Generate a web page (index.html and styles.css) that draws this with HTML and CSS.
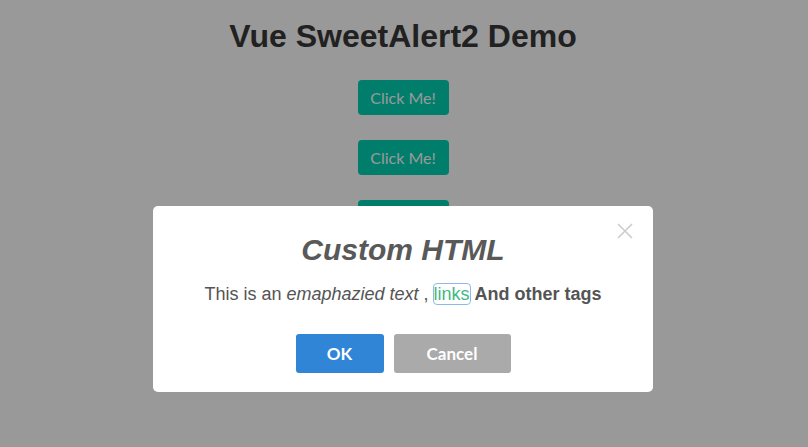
FILE: index.html
```html
<!DOCTYPE html>
<html lang="en">
<head>
<meta charset="utf-8">
<title>Vue SweetAlert2 Demo</title>
<link rel="stylesheet" href="styles.css">
</head>
<body>
<div class="app">
  <h1 class="app-title">Vue SweetAlert2 Demo</h1>
  <div class="demo-list">
    <button class="demo-btn">Click Me!</button>
    <button class="demo-btn">Click Me!</button>
    <button class="demo-btn">Click Me!</button>
    <button class="demo-btn">Click Me!</button>
  </div>
</div>
<div class="overlay">
  <div class="popup">
    <button class="popup-close" aria-label="Close">
      <svg width="16" height="16" viewBox="0 0 16 16"><path d="M1 1 L15 15 M15 1 L1 15" stroke="#cccccc" stroke-width="1.6" fill="none"/></svg>
    </button>
    <h2 class="popup-title">Custom HTML</h2>
    <div class="popup-content">This is an <em>emaphazied text</em> , <a class="popup-link" href="#">links</a> <strong>And other tags</strong></div>
    <div class="popup-actions">
      <button class="popup-btn popup-btn-ok">OK</button>
      <button class="popup-btn popup-btn-cancel">Cancel</button>
    </div>
  </div>
</div>
</body>
</html>
```
FILE: styles.css
```css
html, body {
  margin: 0;
  padding: 0;
}
body {
  background: #ffffff;
  font-family: "Liberation Sans", Arial, sans-serif;
  color: #363636;
  height: 447px;
  overflow: hidden;
}
.app {
  display: flex;
  flex-direction: column;
  align-items: center;
  padding: 18px 2px 0 0;
}
.app-title {
  margin: 0;
  font-size: 32px;
  font-weight: bold;
  line-height: 36px;
  color: #383838;
}
.demo-list {
  display: flex;
  flex-direction: column;
  align-items: center;
  gap: 25px;
  margin-top: 26px;
}
.demo-btn {
  font-family: Lato, "Open Sans", sans-serif;
  font-size: 16px;
  color: #ffffff;
  background: #00d1b2;
  border: none;
  border-radius: 4px;
  height: 35px;
  width: 91px;
  padding: 0;
}
.overlay {
  position: fixed;
  inset: 0;
  background: rgba(0, 0, 0, 0.4);
  display: flex;
  justify-content: center;
  align-items: flex-start;
  padding: 206px 2px 0 0;
}
.popup {
  position: relative;
  width: 500px;
  box-sizing: border-box;
  background: #ffffff;
  border-radius: 5px;
  padding: 25px 20px 19px;
  display: flex;
  flex-direction: column;
  align-items: center;
}
.popup-close {
  position: absolute;
  top: 17px;
  right: 20px;
  width: 16px;
  height: 16px;
  padding: 0;
  border: none;
  background: transparent;
  line-height: 0;
}
.popup-title {
  margin: 0;
  font-size: 30px;
  font-style: italic;
  font-weight: bold;
  line-height: 38px;
  color: #595959;
}
.popup-content {
  margin-top: 13px;
  font-size: 18px;
  line-height: 24px;
  color: #545454;
}
.popup-content em {
  font-style: italic;
}
.popup-content strong {
  font-weight: bold;
}
.popup-link {
  color: #42b983;
  text-decoration: none;
  outline: 1.5px solid #8fb8ec;
  border-radius: 3px;
  outline-offset: 0;
}
.popup-actions {
  display: flex;
  gap: 10px;
  margin-top: 28px;
}
.popup-btn {
  font-family: Lato, "Open Sans", sans-serif;
  font-size: 17px;
  font-weight: bold;
  color: #ffffff;
  border: none;
  border-radius: 3px;
  height: 39px;
  padding: 0;
}
.popup-btn-ok {
  background: #3085d6;
  width: 88px;
}
.popup-btn-cancel {
  background: #aaaaaa;
  width: 117px;
}
```
